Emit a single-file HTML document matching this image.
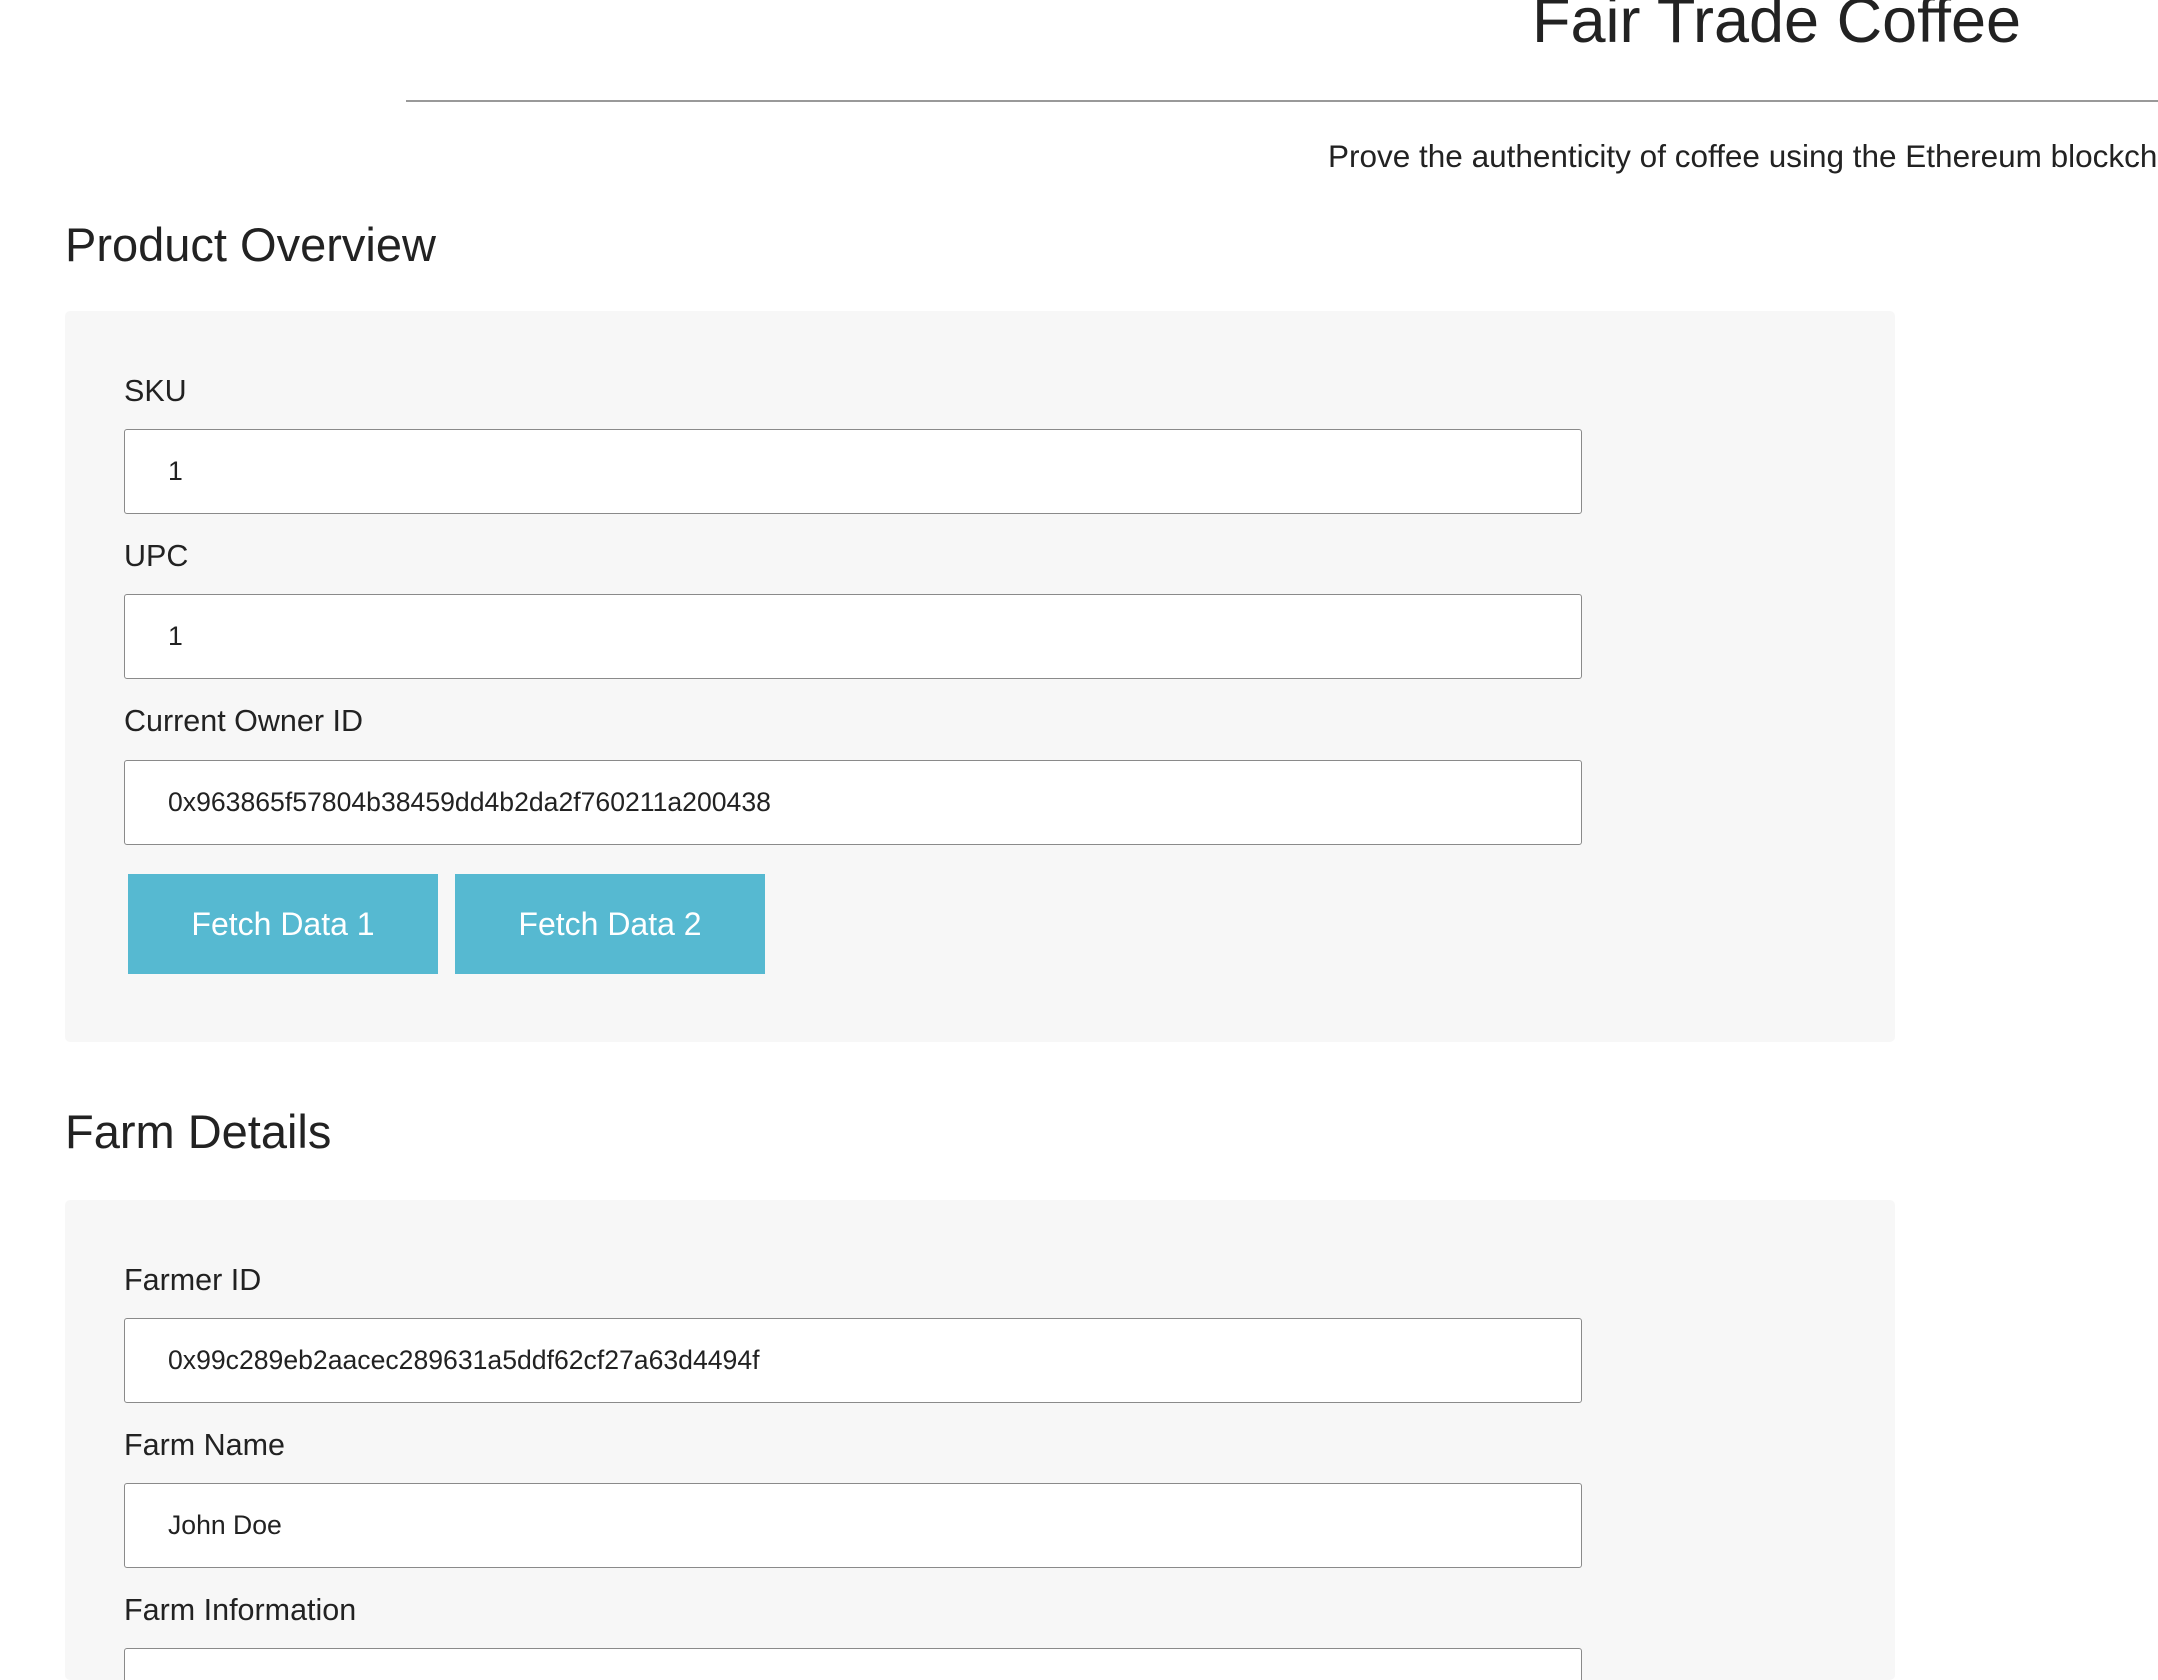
<!DOCTYPE html>
<html style="overflow:hidden"><head><meta charset="utf-8"><style>
html,body{margin:0;width:2158px;height:1680px;overflow:hidden}
body{background:#fff;font-family:"Liberation Sans",sans-serif;color:#222;position:relative}
.a{position:absolute;white-space:nowrap}
.lbl{font-size:30.5px;line-height:30px}
.h{font-size:47px;line-height:50px}
.panel{position:absolute;left:65px;width:1830px;background:#f7f7f7;border-radius:5px}
.inp{position:absolute;left:124px;width:1458px;height:85px;border:1px solid #8a8a8a;border-radius:3px;background:#fff;box-sizing:border-box;font-size:26.6px;line-height:83px;padding-left:43px}
.btn{position:absolute;top:874px;width:310px;height:100px;background:#56b9d1;color:#fff;font-size:32px;line-height:100px;text-align:center}
</style></head><body>
<div class="a" style="left:1532px;top:-14px;font-size:63px;line-height:70px">Fair Trade Coffee</div>
<div class="a" style="left:406px;top:100px;width:1752px;height:2px;background:#999"></div>
<div class="a" style="left:1328px;top:141px;font-size:31.5px;line-height:30px">Prove the authenticity of coffee using the Ethereum blockchain</div>
<div class="a h" style="left:65px;top:220px">Product Overview</div>
<div class="panel" style="top:311px;height:731px"></div>
<div class="a lbl" style="left:124px;top:376px">SKU</div>
<div class="inp" style="top:429px">1</div>
<div class="a lbl" style="left:124px;top:541px">UPC</div>
<div class="inp" style="top:594px">1</div>
<div class="a lbl" style="left:124px;top:706px">Current Owner ID</div>
<div class="inp" style="top:760px">0x963865f57804b38459dd4b2da2f760211a200438</div>
<div class="btn" style="left:128px">Fetch Data 1</div>
<div class="btn" style="left:455px">Fetch Data 2</div>
<div class="a h" style="left:65px;top:1107px">Farm Details</div>
<div class="panel" style="top:1200px;height:480px"></div>
<div class="a lbl" style="left:124px;top:1265px">Farmer ID</div>
<div class="inp" style="top:1318px">0x99c289eb2aacec289631a5ddf62cf27a63d4494f</div>
<div class="a lbl" style="left:124px;top:1430px">Farm Name</div>
<div class="inp" style="top:1483px">John Doe</div>
<div class="a lbl" style="left:124px;top:1595px">Farm Information</div>
<div class="inp" style="top:1648px;height:40px"></div>
</body></html>
